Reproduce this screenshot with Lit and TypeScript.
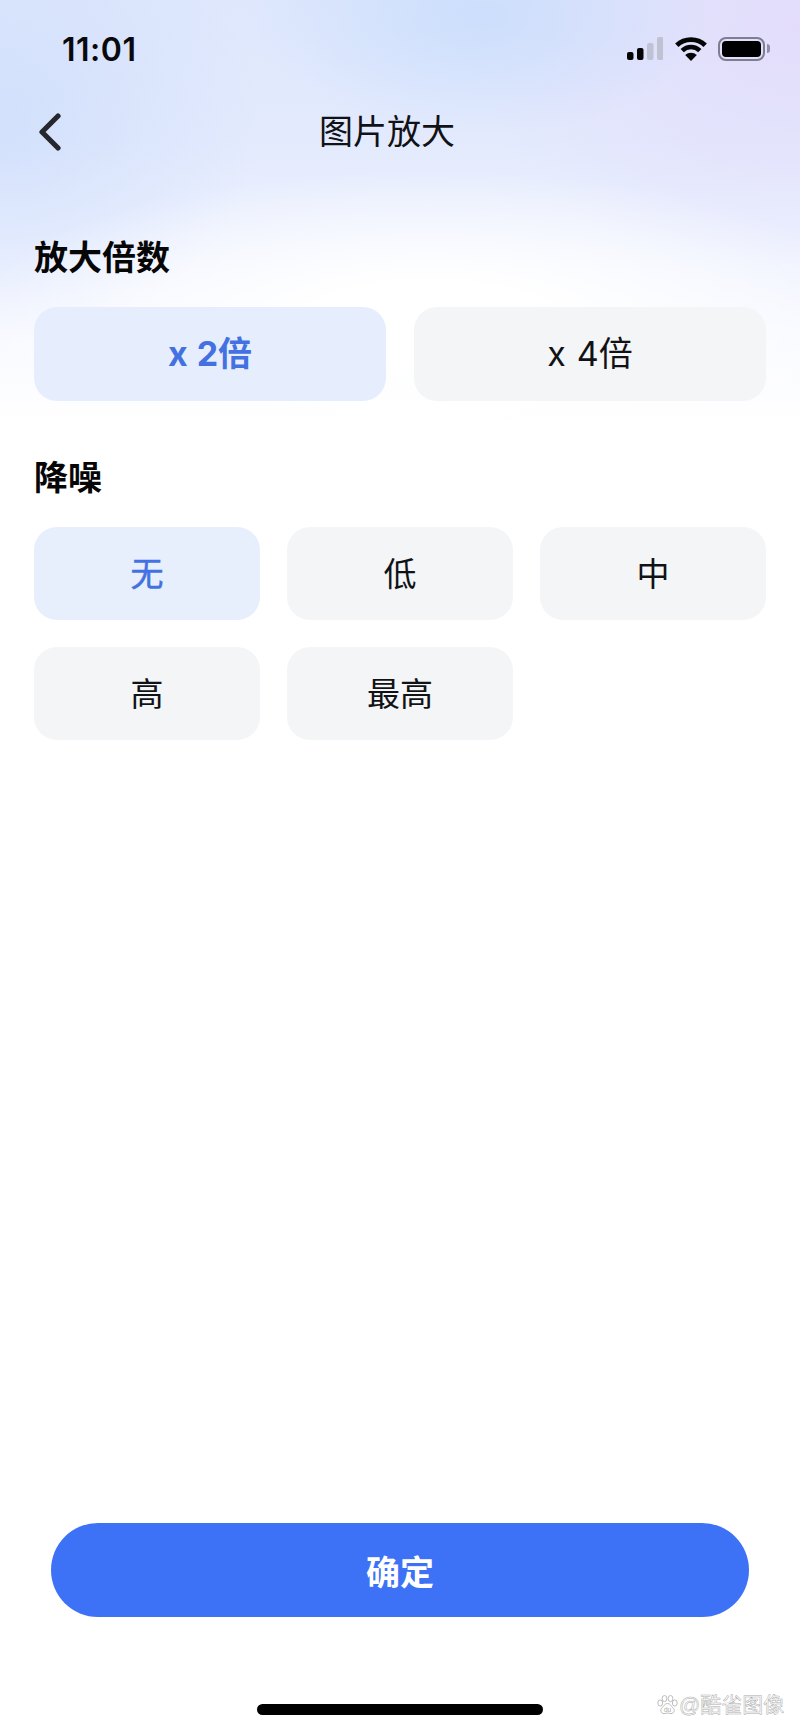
import { LitElement, html, css, svg } from "lit";
import { customElement } from "lit/decorators.js";

const signal = html`<svg class="signal" width="36" height="23" viewBox="0 0 36 23">
  ${[
    [0, 15, 8, "#050505"],
    [10, 11, 12, "#050505"],
    [20, 6, 17, "#bfc2d2"],
    [30, 0, 23, "#bfc2d2"],
  ].map(([x, y, h, c]) => svg`<rect x=${x} y=${y} width="6.5" height=${h} rx="2" fill=${c}></rect>`)}
</svg>`;

const wifi = html`<svg class="wifi" width="32" height="24" viewBox="0 0 32 24" fill="none">
  <path d="M1.8 8.3A20.5 20.5 0 0 1 30.2 8.3" stroke="#050505" stroke-width="4.8"></path>
  <path d="M7.2 13.6A12.6 12.6 0 0 1 24.8 13.6" stroke="#050505" stroke-width="4.6"></path>
  <path d="M16 24L10.2 18.1A8.2 8.2 0 0 1 21.8 18.1Z" fill="#050505"></path>
</svg>`;

const back = html`<svg width="24" height="38" viewBox="0 0 24 38" fill="none">
  <path d="M20 3L4 19L20 35" stroke="#25272d" stroke-width="5.2" stroke-linecap="round" stroke-linejoin="round"></path>
</svg>`;

const paw = html`<svg width="21" height="20" viewBox="0 0 21 20" fill="#fff" stroke="#b4b4b4" stroke-width="0.9">
  <ellipse cx="3.2" cy="8" rx="2.4" ry="3.1"></ellipse>
  <ellipse cx="7.5" cy="3.6" rx="2.4" ry="3.1"></ellipse>
  <ellipse cx="13.5" cy="3.6" rx="2.4" ry="3.1"></ellipse>
  <ellipse cx="17.8" cy="8" rx="2.4" ry="3.1"></ellipse>
  <path d="M10.5 8.5C7.5 8.5 6.8 11.5 4.8 13C3 14.5 3.6 18.6 7 18.6C8.6 18.6 9.2 18 10.5 18C11.8 18 12.4 18.6 14 18.6C17.4 18.6 18 14.5 16.2 13C14.2 11.5 13.5 8.5 10.5 8.5Z"></path>
  <text x="10.5" y="16.6" text-anchor="middle" font-size="6.5" font-family="Liberation Sans" fill="#a8a8a8" stroke="none">du</text>
</svg>`;

@customElement("app-root")
export class AppRoot extends LitElement {
  static styles = css`
    :host {
      display: block;
      font-family: Inter, "Noto Sans CJK SC", sans-serif;
      color: #0b0b0d;
    }
    .page {
      position: relative;
      height: 1732px;
      box-sizing: border-box;
      display: flex;
      flex-direction: column;
      overflow: hidden;
      background-color: #fff;
      background-repeat: no-repeat;
      background-size: 100% 440px;
      background-image:
        radial-gradient(ellipse 460px 150px at 430px 320px, #ffffff 25%, rgba(255, 255, 255, 0)),
        radial-gradient(ellipse 230px 120px at 480px 15px, rgba(199, 220, 252, 0.8), rgba(199, 220, 252, 0)),
        radial-gradient(ellipse 340px 240px at 800px 30px, rgba(227, 221, 251, 1), rgba(227, 221, 251, 0)),
        radial-gradient(ellipse 260px 220px at 0px 120px, rgba(203, 220, 251, 0.7), rgba(203, 220, 251, 0)),
        linear-gradient(180deg, #dee7fc 0px, #e3eafd 140px, #ebf0fe 230px, #f5f7ff 310px, #fafbff 360px, #ffffff 425px);
    }
    .status {
      height: 96px;
      flex: none;
      display: flex;
      align-items: center;
      justify-content: space-between;
      padding: 0 30px 0 62px;
    }
    .time {
      font-size: 32px;
      font-weight: 600;
      letter-spacing: 0.5px;
      line-height: 1;
      color: #08090c;
      padding-top: 3px;
    }
    .icons {
      display: flex;
      align-items: center;
      padding-top: 1px;
    }
    .signal {
      margin-right: 12px;
    }
    .wifi {
      margin-right: 11px;
    }
    .battery {
      display: flex;
      align-items: center;
      gap: 2px;
    }
    .cell {
      box-sizing: border-box;
      width: 47px;
      height: 24px;
      padding: 2px;
      border: 2px solid #7c7e92;
      border-radius: 8px;
    }
    .cell i {
      display: block;
      height: 100%;
      background: #000;
      border-radius: 4px;
    }
    .nub {
      width: 3px;
      height: 9px;
      background: #8f91a3;
      border-radius: 0 3px 3px 0;
    }
    .nav {
      height: 72px;
      flex: none;
      position: relative;
      display: flex;
      align-items: center;
      justify-content: center;
      padding-right: 26px;
      font-size: 34px;
      line-height: 44px;
      color: #111216;
    }
    .backbtn {
      position: absolute;
      left: 38px;
      top: 17px;
      display: flex;
    }
    .body {
      padding: 68px 34px 0;
      display: flex;
      flex-direction: column;
    }
    h2 {
      margin: 0 0 27px;
      font-size: 34px;
      line-height: 44px;
      font-weight: 700;
      color: #060607;
    }
    .grid {
      display: grid;
      margin-bottom: 55px;
    }
    .two {
      grid-template-columns: repeat(2, 1fr);
      gap: 28px;
    }
    .three {
      grid-template-columns: repeat(3, 1fr);
      gap: 27px;
    }
    .chip {
      height: 93px;
      border-radius: 23px;
      background: #f4f5f7;
      display: flex;
      align-items: center;
      justify-content: center;
      font-size: 33px;
      line-height: 44px;
      color: #111216;
    }
    .two .chip {
      height: 94px;
      font-size: 34px;
      word-spacing: 1.5px;
    }
    .chip.on {
      background: #e7effd;
      color: #4371e2;
      -webkit-text-stroke: 0.5px #4371e2;
    }
    .two .chip.on {
      background: #e6eefd;
      font-weight: 700;
      word-spacing: 1px;
      -webkit-text-stroke: 0;
    }
    .spacer {
      flex: 1;
    }
    .confirm {
      flex: none;
      margin: 0 51px;
      height: 94px;
      border-radius: 47px;
      background: #3d71f6;
      color: #fff;
      font-size: 34px;
      font-weight: 700;
      display: flex;
      align-items: center;
      justify-content: center;
    }
    .homebar {
      flex: none;
      align-self: center;
      width: 286px;
      height: 11px;
      margin: 87px 0 17px;
      border-radius: 6px;
      background: #000;
    }
    .mark {
      position: absolute;
      left: 657px;
      top: 1692px;
      display: flex;
      align-items: center;
      gap: 1px;
      font-size: 21px;
      line-height: 26px;
      color: #fff;
      -webkit-text-stroke: 0.5px #adadad;
      font-family: "Liberation Sans", "Noto Sans CJK SC", sans-serif;
    }
  `;

  render() {
    return html`<div class="page">
      <div class="status">
        <span class="time">11:01</span>
        <div class="icons">
          ${signal}${wifi}
          <div class="battery"><div class="cell"><i></i></div><div class="nub"></div></div>
        </div>
      </div>
      <div class="nav"><span class="backbtn">${back}</span>图片放大</div>
      <div class="body">
        <h2>放大倍数</h2>
        <div class="grid two">
          <div class="chip on">x 2倍</div>
          <div class="chip">x 4倍</div>
        </div>
        <h2>降噪</h2>
        <div class="grid three">
          <div class="chip on">无</div>
          <div class="chip">低</div>
          <div class="chip">中</div>
          <div class="chip">高</div>
          <div class="chip">最高</div>
        </div>
      </div>
      <div class="spacer"></div>
      <div class="confirm">确定</div>
      <div class="homebar"></div>
      <div class="mark">${paw}<span>@酷雀图像</span></div>
    </div>`;
  }
}
